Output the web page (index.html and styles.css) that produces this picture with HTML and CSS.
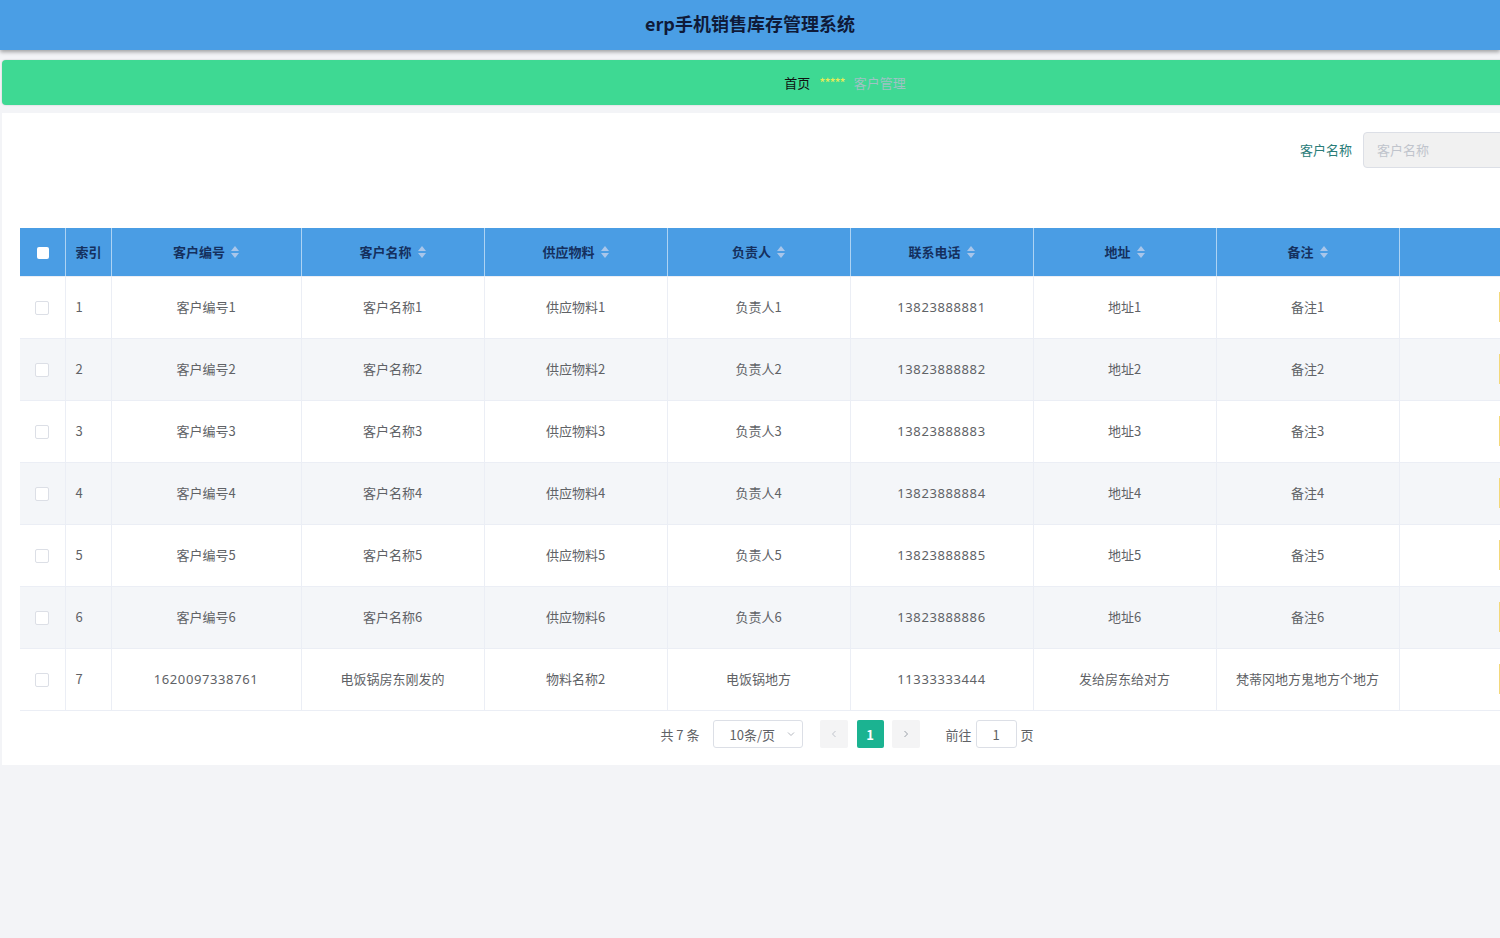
FILE: index.html
```html
<!DOCTYPE html>
<html lang="zh-CN">
<head>
<meta charset="utf-8">
<title>erp手机销售库存管理系统</title>
<link rel="stylesheet" href="styles.css">
</head>
<body>
<header class="topbar"><h1 class="title">erp手机销售库存管理系统</h1></header>
<main class="page">
  <nav class="crumb">
    <span class="crumb-home">首页</span>
    <span class="crumb-sep">*****</span>
    <span class="crumb-cur">客户管理</span>
  </nav>
  <section class="card">
    <form class="search">
      <label class="search-label">客户名称</label>
      <input class="search-input" placeholder="客户名称">
    </form>
    <table class="grid">
      <colgroup>
        <col class="c-check"><col class="c-idx"><col class="c-code"><col class="c-std"><col class="c-std"><col class="c-std"><col class="c-std"><col class="c-std"><col class="c-std"><col class="c-act">
      </colgroup>
      <thead>
        <tr>
          <th class="center"><span class="hcheck"></span></th>
          <th class="left">索引</th>
          <th>客户编号<i class="sort"></i></th>
          <th>客户名称<i class="sort"></i></th>
          <th>供应物料<i class="sort"></i></th>
          <th>负责人<i class="sort"></i></th>
          <th>联系电话<i class="sort"></i></th>
          <th>地址<i class="sort"></i></th>
          <th>备注<i class="sort"></i></th>
          <th></th>
        </tr>
      </thead>
      <tbody>
        <tr><td class="center"><span class="check"></span></td><td class="left">1</td><td>客户编号1</td><td>客户名称1</td><td>供应物料1</td><td>负责人1</td><td class="num">13823888881</td><td>地址1</td><td>备注1</td><td class="act"><span class="btn"></span></td></tr>
        <tr><td class="center"><span class="check"></span></td><td class="left">2</td><td>客户编号2</td><td>客户名称2</td><td>供应物料2</td><td>负责人2</td><td class="num">13823888882</td><td>地址2</td><td>备注2</td><td class="act"><span class="btn"></span></td></tr>
        <tr><td class="center"><span class="check"></span></td><td class="left">3</td><td>客户编号3</td><td>客户名称3</td><td>供应物料3</td><td>负责人3</td><td class="num">13823888883</td><td>地址3</td><td>备注3</td><td class="act"><span class="btn"></span></td></tr>
        <tr><td class="center"><span class="check"></span></td><td class="left">4</td><td>客户编号4</td><td>客户名称4</td><td>供应物料4</td><td>负责人4</td><td class="num">13823888884</td><td>地址4</td><td>备注4</td><td class="act"><span class="btn"></span></td></tr>
        <tr><td class="center"><span class="check"></span></td><td class="left">5</td><td>客户编号5</td><td>客户名称5</td><td>供应物料5</td><td>负责人5</td><td class="num">13823888885</td><td>地址5</td><td>备注5</td><td class="act"><span class="btn"></span></td></tr>
        <tr><td class="center"><span class="check"></span></td><td class="left">6</td><td>客户编号6</td><td>客户名称6</td><td>供应物料6</td><td>负责人6</td><td class="num">13823888886</td><td>地址6</td><td>备注6</td><td class="act"><span class="btn"></span></td></tr>
        <tr><td class="center"><span class="check"></span></td><td class="left">7</td><td class="num">1620097338761</td><td>电饭锅房东刚发的</td><td>物料名称2</td><td>电饭锅地方</td><td class="num">11333333444</td><td>发给房东给对方</td><td>梵蒂冈地方鬼地方个地方</td><td class="act"><span class="btn"></span></td></tr>
      </tbody>
    </table>
    <div class="pager">
      <span class="total">共 7 条</span>
      <span class="size">10条/页<svg class="chev" viewBox="0 0 10 10" width="10" height="10"><path d="M2 3.5 L5 6.5 L8 3.5" fill="none" stroke="#b4b8bf" stroke-width="1"/></svg></span>
      <span class="pbtn"><svg viewBox="0 0 10 10" width="10" height="10"><path d="M6.5 2 L3.5 5 L6.5 8" fill="none" stroke="#c0c4cc" stroke-width="1"/></svg></span>
      <span class="pnum">1</span>
      <span class="pbtn"><svg viewBox="0 0 10 10" width="10" height="10"><path d="M3.5 2 L6.5 5 L3.5 8" fill="none" stroke="#9aa0a8" stroke-width="1"/></svg></span>
      <span class="goto">前往<span class="goto-input">1</span>页</span>
    </div>
  </section>
</main>
</body>
</html>
```

FILE: styles.css
```css
html, body {
  margin: 0;
  padding: 0;
}
body {
  width: 1500px;
  height: 938px;
  overflow: hidden;
  background: #f3f4f7;
  font-family: "Noto Sans CJK SC", "Noto Sans", sans-serif;
  color: #606266;
  font-size: 13px;
}
.topbar {
  height: 50px;
  background: #4a9ee5;
  box-shadow: 0 2px 4px rgba(0, 0, 0, 0.35);
  position: relative;
  z-index: 1;
}
.title {
  margin: 0;
  line-height: 47px;
  text-align: center;
  font-size: 18px;
  font-weight: 700;
  color: #0f1a38;
}
.page {
  width: 1686px;
  padding: 10px 0 0 2px;
}
.crumb {
  height: 45px;
  background: #3ed993;
  border-radius: 4px;
  box-shadow: 0 0 2px rgba(0, 0, 0, 0.2);
  display: flex;
  justify-content: center;
  align-items: center;
  gap: 9px;
}
.crumb-home {
  color: #111;
  font-size: 13px;
  line-height: 43px;
}
.crumb-sep {
  color: #e8ec55;
  font-size: 13px;
  letter-spacing: -1px;
  line-height: 43px;
}
.crumb-cur {
  color: #9fc2c4;
  font-size: 13px;
  line-height: 43px;
}
.card {
  margin-top: 8px;
  background: #fff;
  padding: 19px 18px 16px;
}
.search {
  display: flex;
  justify-content: flex-end;
  align-items: center;
  height: 36px;
  margin: 0 127px 60px 0;
}
.search-label {
  color: #2a7c78;
  font-size: 13px;
  margin-right: 11px;
  position: relative;
  top: -1px;
}
.search-input {
  box-sizing: border-box;
  width: 180px;
  height: 36px;
  border: 1px solid #dcdfe6;
  border-radius: 4px;
  background: #f1f1f1;
  padding: 0 13px 2px;
  font-family: inherit;
  font-size: 13px;
  color: #606266;
}
.search-input::placeholder {
  color: #c0c4cc;
}
.grid {
  border-collapse: collapse;
  table-layout: fixed;
  width: 1650px;
}
.c-check { width: 45px; }
.c-idx { width: 46px; }
.c-code { width: 190px; }
.c-std { width: 183px; }
.c-act { width: 271px; }
.grid th {
  height: 46px;
  padding: 0 10px 2px;
  background: #4a9de4;
  color: #15305e;
  font-weight: 700;
  font-size: 13px;
  text-align: center;
  white-space: nowrap;
  border-right: 1px solid rgba(255, 255, 255, 0.55);
  border-bottom: 1px solid #ebeef5;
}
.grid td {
  height: 59px;
  padding: 0 10px 2px;
  text-align: center;
  border-right: 1px solid #ebeef5;
  border-bottom: 1px solid #ebeef5;
  white-space: nowrap;
  overflow: hidden;
}
.grid tbody tr:nth-child(even) td {
  background: #f4f6f9;
}
.grid .left { text-align: left; padding-right: 0; }
.grid .center { text-align: center; padding-left: 0; padding-right: 0; }
.grid .num { letter-spacing: 0.6px; font-family: "Noto Sans", sans-serif; }
.grid td.act { text-align: left; padding-left: 99px; }
.sort {
  display: inline-block;
  vertical-align: middle;
  width: 8px;
  height: 12px;
  margin-left: 6px;
  position: relative;
  top: -1px;
}
.sort::before, .sort::after {
  content: "";
  position: absolute;
  left: 0;
  border-left: 4px solid transparent;
  border-right: 4px solid transparent;
}
.sort::before {
  top: 0;
  border-bottom: 5px solid #a9c6ea;
}
.sort::after {
  bottom: 0;
  border-top: 5px solid #a9c6ea;
}
.hcheck {
  display: inline-block;
  width: 12px;
  height: 12px;
  background: #fff;
  border-radius: 2px;
  vertical-align: middle;
  margin-left: 1px;
}
.check {
  display: inline-block;
  width: 12px;
  height: 12px;
  border: 1px solid #dcdfe6;
  border-radius: 2px;
  background: #fff;
  vertical-align: middle;
}
.btn {
  display: inline-block;
  width: 30px;
  height: 30px;
  border-left: 3px solid #f3d87a;
  vertical-align: middle;
}
.pager {
  display: flex;
  align-items: center;
  justify-content: center;
  height: 28px;
  margin-top: 10px;
  padding-left: 4px;
  font-size: 13px;
  color: #606266;
}
.pager > span {
  position: relative;
  top: -1px;
}
.total {
  margin-right: 13px;
}
.size {
  box-sizing: border-box;
  width: 90px;
  height: 28px;
  border: 1px solid #dcdfe6;
  border-radius: 3px;
  display: flex;
  align-items: center;
  padding-left: 16px;
  margin-right: 17px;
}
.chev {
  position: absolute;
  right: 6px;
  top: 8px;
}
.pbtn {
  width: 28px;
  height: 28px;
  background: #f4f4f5;
  border-radius: 2px;
  display: flex;
  align-items: center;
  justify-content: center;
}
.pnum {
  width: 27px;
  height: 28px;
  margin: 0 8px 0 9px;
  background: #1bb391;
  color: #fff;
  font-weight: 700;
  border-radius: 2px;
  display: flex;
  align-items: center;
  justify-content: center;
  font-size: 13px;
}
.goto {
  margin-left: 26px;
  display: flex;
  align-items: center;
}
.goto-input {
  box-sizing: border-box;
  width: 41px;
  height: 28px;
  margin: 0 4px;
  border: 1px solid #dcdfe6;
  border-radius: 3px;
  display: flex;
  align-items: center;
  justify-content: center;
}
```
